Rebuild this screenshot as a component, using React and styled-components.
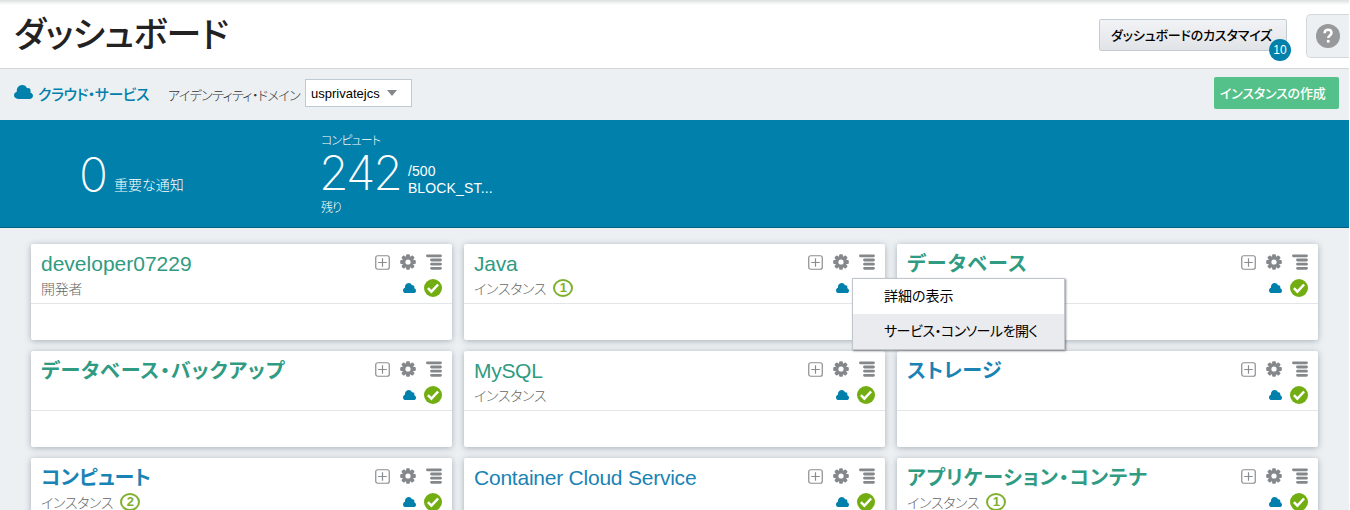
import React from "react";
import styled, { createGlobalStyle, css } from "styled-components";

const Global = createGlobalStyle`
  * { box-sizing: border-box; }
  body { margin: 0; overflow: hidden; background: #fff; }
  button { font: inherit; }
`;

const latin = `"Liberation Sans", "Noto Sans CJK JP", sans-serif`;
const japanese = `"Noto Sans CJK JP", "Liberation Sans", sans-serif`;

const text = css`
  font-family: ${(p) => (p.$latin ? latin : japanese)};
  font-feature-settings: "palt";
  letter-spacing: ${(p) => p.$track || 0}px;
  white-space: nowrap;
`;

const Page = styled.div`
  width: 1349px;
  height: 510px;
  overflow: hidden;
  display: flex;
  flex-direction: column;
  background: #ecf0f3;
`;

const Header = styled.header`
  flex: none;
  height: 69px;
  display: flex;
  align-items: flex-start;
  background: linear-gradient(#dedfe0, #ffffff 5px);
  border-bottom: 1px solid #d6d9dc;
  padding-left: 14px;
`;

const Title = styled.h1`
  ${text}
  flex: 1;
  margin: 7px 0 0;
  font-size: 35px;
  line-height: 50px;
  font-weight: 500;
  color: #222;
`;

const CustomizeButton = styled.button`
  ${text}
  position: relative;
  width: 188px;
  height: 32px;
  margin: 19px 19px 0 0;
  padding: 0 0 0 11px;
  text-align: left;
  font-size: 13px;
  font-weight: 500;
  line-height: 30px;
  color: #000;
  background: linear-gradient(#f1f3f5, #e1e4e7);
  border: 1px solid #c4ccd3;
  border-radius: 2px;
`;

const Badge = styled.span`
  position: absolute;
  right: -5px;
  bottom: -11px;
  width: 22px;
  height: 22px;
  border-radius: 50%;
  background: #0080ab;
  color: #fff;
  font: 12px/23px ${latin};
  letter-spacing: 0;
  text-align: center;
`;

const HelpTab = styled.div`
  width: 43px;
  height: 44px;
  margin-top: 14px;
  padding-left: 9px;
  display: flex;
  align-items: center;
  background: #ecf0f3;
  border: 1px solid #d3d8dc;
  border-right: 0;
  border-radius: 5px 0 0 5px;
`;

const ServiceBar = styled.div`
  flex: none;
  height: 51px;
  display: flex;
  align-items: flex-start;
  padding: 0 10px 0 14px;
`;

const ServiceLink = styled.span`
  ${text}
  width: 120px;
  margin: 14px 0 0 5px;
  font-size: 15px;
  line-height: 22px;
  font-weight: 500;
  color: #0080ab;
`;

const DomainLabel = styled.span`
  ${text}
  width: 137px;
  margin: 16px 0 0 10px;
  font-size: 13px;
  line-height: 20px;
  font-weight: 300;
  color: #333;
`;

const Select = styled.div`
  width: 107px;
  height: 28px;
  margin-top: 10px;
  padding: 0 14px 0 5px;
  display: flex;
  align-items: center;
  justify-content: space-between;
  background: #fff;
  border: 1px solid #c0cad2;
  font: 13px/28px ${latin};
  color: #000;

  span {
    padding-top: 2px;
  }
`;

const CreateButton = styled.button`
  ${text}
  width: 125px;
  height: 32px;
  margin: 8px 0 0 auto;
  padding: 0 0 0 6px;
  text-align: left;
  font-size: 13px;
  font-weight: 500;
  line-height: 32px;
  color: #fff;
  background: #55c18a;
  border: 0;
  border-radius: 2px;
`;

const Banner = styled.section`
  flex: none;
  height: 108px;
  display: flex;
  background: #0080ab;
  border-bottom: 1px solid #006080;
  color: #fff;
  padding-left: 79px;
`;

const Figure = styled.span`
  font-family: Inter, sans-serif;
  font-weight: 250;
  font-size: 48px;
  line-height: 48px;
  letter-spacing: ${(p) => p.$track}px;
`;

const Notices = styled.div`
  width: 242px;
  display: flex;
  align-items: flex-start;
  padding-top: 31px;
`;

const NoticeLabel = styled.span`
  ${text}
  margin: 22px 0 0 6px;
  font-size: 14px;
  line-height: 22px;
  font-weight: 300;
`;

const Usage = styled.div`
  display: flex;
  flex-direction: column;
`;

const UsageLabel = styled.span`
  ${text}
  margin-top: ${(p) => p.$top}px;
  height: 18px;
  font-size: 12px;
  line-height: 18px;
  font-weight: 300;
`;

const UsageRow = styled.div`
  display: flex;
  height: 48px;
  margin-left: -2px;
`;

const Quota = styled.div`
  margin: 14px 0 0 7px;
  font: 14px/17px ${latin};
  letter-spacing: 0.15px;
`;

const Grid = styled.main`
  display: grid;
  grid-template-columns: repeat(3, 421px);
  grid-auto-rows: 96px;
  gap: 11px 12px;
  padding: 16px 0 0 31px;
`;

const Card = styled.article`
  background: #fff;
  border-radius: 2px;
  box-shadow: 0 1px 6px rgba(70, 85, 98, 0.42);
`;

const CardHead = styled.div`
  height: 60px;
  display: flex;
  justify-content: space-between;
  border-bottom: 1px solid #e3e6e8;
  padding: 4px 10px 0 10px;
`;

const Name = styled.div`
  ${text}
  font-size: ${(p) => (p.$latin ? 21 : 20)}px;
  line-height: ${(p) => (p.$latin ? 32 : 30)}px;
  height: 30px;
  font-weight: ${(p) => (p.$latin ? 400 : 700)};
  color: ${(p) => (p.$blue ? "#1983b5" : "#2f9b82")};
`;

const Kind = styled.div`
  display: flex;
  align-items: center;
  height: 20px;
`;

const KindLabel = styled.span`
  ${text}
  font-size: 14px;
  line-height: 20px;
  font-weight: 300;
  color: #666;
`;

const Count = styled.span`
  width: 20px;
  height: 18px;
  margin: 0 0 0 7px;
  border: 2px solid #80b030;
  border-radius: 50%;
  font: bold 13px/14px ${latin};
  text-align: center;
  color: #80b030;
`;

const Tools = styled.div`
  display: grid;
  grid-template-columns: 15px 16px 16px;
  grid-template-rows: 16px 18px;
  gap: 9px 10px;
  padding-top: 6px;
  align-items: center;
  justify-items: center;
`;

const CloudCell = styled.div`
  grid-column: 2;
  height: 12px;
  margin-left: 3px;
  display: flex;
  align-items: center;
`;

const StatusCell = styled.div`
  height: 18px;
  justify-self: end;
  display: flex;
`;

const Menu = styled.div`
  position: absolute;
  left: 852px;
  top: 278px;
  width: 213px;
  height: 72px;
  background: #fff;
  border: 1px solid #c0c6cb;
  box-shadow: 1px 1px 2px rgba(0, 0, 0, 0.45);
`;

const MenuItem = styled.div`
  ${text}
  height: 35px;
  padding-left: 31px;
  font-size: 14px;
  line-height: 33px;
  color: #000;
  background: ${(p) => (p.$active ? "#e9ebee" : "#fff")};
`;

const Cloud = ({ width, height }) => (
  <svg width={width} height={height} viewBox="0 0 20 15" preserveAspectRatio="none" fill="#0080ab">
    <path d="M4.500 15C1.800 15 0 13.400 0 11.100 0 9 1.400 7.600 3 7.200 2.500 3.200 5 .1 8.500 0c2.500 0 4.500 1.300 5.200 3.500 2-.8 4.100.6 3.800 3.200-.1.500-.2.900-.4 1.300C18.900 8.500 20 9.900 20 11.500 20 13.600 18.500 15 16.300 15z" />
  </svg>
);

const Plus = () => (
  <svg width="15" height="15" viewBox="0 0 15 15" fill="none" stroke="#8a8d90">
    <rect x="0.750" y="0.750" width="13.500" height="13.500" rx="2" strokeWidth="1.200" />
    <path d="M7.500 3.200v8.600M3.200 7.500h8.600" strokeWidth="1.200" />
  </svg>
);

const Gear = () => (
  <svg width="16" height="16" viewBox="0 0 16 16">
    <g fill="#85888b">
      {[0, 45, 90, 135].map((angle) => (
        <rect key={angle} x="6.100" y="0.200" width="3.800" height="15.600" rx="1" transform={`rotate(${angle} 8 8)`} />
      ))}
      <circle cx="8" cy="8" r="5.900" />
    </g>
    <circle cx="8" cy="8" r="2.600" fill="#fff" />
  </svg>
);

const Lines = () => (
  <svg width="16" height="16" viewBox="0 0 16 16" stroke="#85888b" strokeWidth="2.800" strokeLinecap="round">
    <path d="M1.400 1.800H14.500M5.500 6H14.500M5.500 10.200H14.500M5.500 14.300H14.500" />
  </svg>
);

const Check = () => (
  <svg width="18" height="18" viewBox="0 0 18 18">
    <circle cx="9" cy="9" r="9" fill="#72ae12" />
    <path d="M3.900 9.200l3.500 3.500 6.700-7.200" fill="none" stroke="#fff" strokeWidth="2.500" />
  </svg>
);

const Help = () => (
  <svg width="24" height="24" viewBox="0 0 24 24">
    <circle cx="12" cy="12" r="12" fill="#97999b" />
    <path d="M8.600 9.300C8.600 7 10 5.800 12.100 5.800c2 0 3.400 1.200 3.400 3 0 2.700-3.200 2.700-3.200 5.300" fill="none" stroke="#fff" strokeWidth="2.500" />
    <rect x="10.900" y="15.900" width="2.700" height="2.700" fill="#fff" />
  </svg>
);

const services = [
  { name: "developer07229", latin: true, kind: "開発者" },
  { name: "Java", latin: true, track: -0.2, kind: "インスタンス", count: 1 },
  { name: "データベース", track: 1.3 },
  { name: "データベース・バックアップ", track: 0.95 },
  { name: "MySQL", latin: true, track: -0.3, kind: "インスタンス" },
  { name: "ストレージ", blue: true, track: 0.5 },
  { name: "コンピュート", blue: true, kind: "インスタンス", count: 2 },
  { name: "Container Cloud Service", latin: true, blue: true, track: -0.23 },
  { name: "アプリケーション・コンテナ", track: 0.8, kind: "インスタンス", count: 1 },
];

const ServiceCard = ({ service }) => (
  <Card>
    <CardHead>
      <div>
        <Name $latin={service.latin} $blue={service.blue} $track={service.track}>{service.name}</Name>
        <Kind>
          {service.kind && <KindLabel $track={-0.3}>{service.kind}</KindLabel>}
          {service.count && <Count>{service.count}</Count>}
        </Kind>
      </div>
      <Tools>
        <Plus />
        <Gear />
        <Lines />
        <CloudCell><Cloud width={13} height={10} /></CloudCell>
        <StatusCell><Check /></StatusCell>
      </Tools>
    </CardHead>
  </Card>
);

const BarCloud = styled.span`
  height: 14px;
  margin-top: 16px;
  display: flex;
`;

export default function App() {
  return (
    <Page>
      <Global />
      <Header>
        <Title $track={-0.5}>ダッシュボード</Title>
        <CustomizeButton $track={-0.15}>
          ダッシュボードのカスタマイズ
          <Badge>10</Badge>
        </CustomizeButton>
        <HelpTab><Help /></HelpTab>
      </Header>
      <ServiceBar>
        <BarCloud><Cloud width={19} height={14} /></BarCloud>
        <ServiceLink $track={-0.5}>クラウド・サービス</ServiceLink>
        <DomainLabel $track={-0.6}>アイデンティティ・ドメイン</DomainLabel>
        <Select>
          <span>usprivatejcs</span>
          <svg width="10" height="6" viewBox="0 0 10 6"><path d="M0 0h10L5 6z" fill="#85888b" /></svg>
        </Select>
        <CreateButton $track={-0.2}>インスタンスの作成</CreateButton>
      </ServiceBar>
      <Banner>
        <Notices>
          <Figure $track={0}>0</Figure>
          <NoticeLabel>重要な通知</NoticeLabel>
        </Notices>
        <Usage>
          <UsageLabel $top={11} $track={-0.9}>コンピュート</UsageLabel>
          <UsageRow>
            <Figure $track={-2}>242</Figure>
            <Quota>/500<br />BLOCK_ST...</Quota>
          </UsageRow>
          <UsageLabel $top={1} $track={-1}>残り</UsageLabel>
        </Usage>
      </Banner>
      <Grid>
        {services.map((service) => <ServiceCard key={service.name} service={service} />)}
      </Grid>
      <Menu>
        <MenuItem>詳細の表示</MenuItem>
        <MenuItem $active $track={-0.5}>サービス・コンソールを開く</MenuItem>
      </Menu>
    </Page>
  );
}
